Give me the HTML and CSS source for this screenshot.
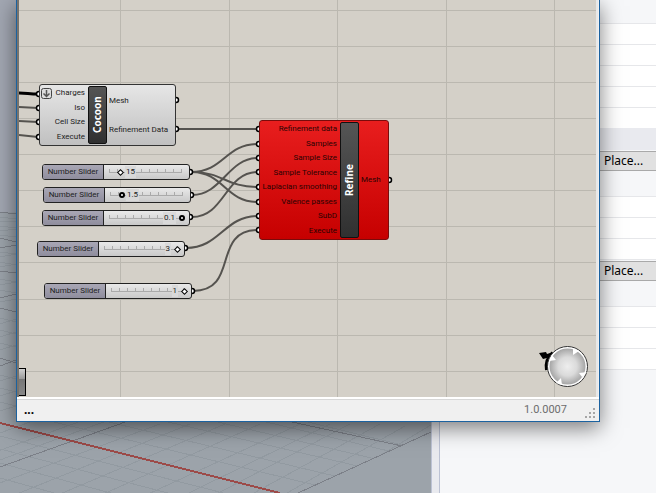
FILE: index.html
```html
<!DOCTYPE html>
<html lang="en">
<head>
<meta charset="utf-8">
<title>Cocoon definition</title>
<link rel="stylesheet" href="styles.css">
</head>
<body>
<main class="desktop">
  <div class="viewport">
    <svg class="viewport-grid" viewBox="0 0 431 493" preserveAspectRatio="xMinYMin slice" aria-hidden="true" fill="none">
      <defs>
        <clipPath id="ground"><path d="M0 420H431V432L298 493H0Z"/></clipPath>
      </defs>
      <rect y="212" width="431" height="281" fill="#9ca3aa"/>
      <g class="minor">
        <path d="M0 217l16 2M0 222l16 -1M0 226l16 2M0 231l16 -2M0 235l16 2M0 252l16 2M0 257l16 -3M0 262l16 3M0 267l16 -3M0 279l16 3M0 285l16 -3M0 290l16 3M0 302l16 -3M0 318l16 4M0 324l16 -5M0 330l16 4M0 337l16 -5M0 343l16 4M0 350l16 -5M0 375l16 4M0 381l16 -5M0 388l16 4M0 396l16 -5M0 402l16 4M0 411l16 -5"/>
      </g>
      <g class="minor" clip-path="url(#ground)">
        <path d="M0 347L431 452M0 359L431 461M0 371L431 472M0 383L431 483M0 396L431 499M0 409L431 513M0 436L431 546M0 449L431 562M0 463L431 580M0 478L431 597"/>
        <path d="M-60 455L60 411M-60 472L95 416M-60 505L160 424M-60 525L190 424M-60 545L225 424M-60 567L260 424M-60 590L300 424M-20 595L330 424M20 597L350 424M60 599L380 424M100 599L405 426M140 599L431 425M190 575L431 432M-60 482L128 413"/>
      </g>
      <path class="major" d="M0 212l16 2M0 238l16 4M0 248l16 -3M0 271l16 2M0 298l16 -4M0 308l16 4M0 358l16 5M0 366l16 -6M0 467L128 421M292 422L402 446M298 493L431 432"/>
      <path class="axis" d="M0 423L200 473L280 493"/>
    </svg>
  </div>

  <aside class="side">
    <div class="side-body">
      <div class="gap-top"></div>
      <div class="line"></div><div class="line"></div><div class="line"></div><div class="line"></div><div class="line"></div>
      <div class="heading-row"></div>
      <button class="place" type="button">Place...</button>
      <div class="spacer"></div>
      <div class="line"></div><div class="line"></div><div class="line last"></div>
      <button class="place" type="button">Place...</button>
      <div class="spacer"></div>
      <div class="line"></div><div class="line"></div><div class="line last"></div>
    </div>
  </aside>

  <section class="window">
    <div class="canvas">
      <svg class="wires" width="577" height="397" viewBox="19 0 577 397" fill="none" aria-hidden="true">
        <path class="rules" d="M19 10.500H596M19 46.500H596M19 82.500H596M19 118.500H596M19 154.500H596M19 190.500H596M19 226.500H596M19 262.500H596M19 299.500H596M19 335.500H596M19 371.500H596M120.500 0V397M229.500 0V397M337.500 0V397M446.500 0V397M554.500 0V397"/>
        <path class="wire heavy" d="M19 93C26 93 30 94 38 94"/>
        <path class="wire" d="M19 107L38 108M19 121L38 122M19 135L38 137"/>
        <path class="wire" d="M177 129H258M191 172C224 172 225 144 258 144M191 172C224 172 225 187 258 187M191 172C224 172 225 202 258 202M192 195C222 195 228 158 258 158M192 217C225 217 225 172 258 172M186 248C220 248 224 216 258 216M193 291C240 291 211 230 258 230"/>
        <g class="grips">
          <circle cx="39" cy="94" r="2.500"/><circle cx="39" cy="108" r="2.500"/><circle cx="39" cy="122" r="2.500"/><circle cx="39" cy="137" r="2.500"/>
          <circle cx="176" cy="100" r="2.500"/><circle cx="176" cy="129" r="2.500"/>
          <circle cx="190" cy="172" r="2.500"/><circle cx="191" cy="195" r="2.500"/><circle cx="190" cy="217" r="2.500"/><circle cx="185" cy="248" r="2.500"/><circle cx="192" cy="291" r="2.500"/>
          <circle cx="259" cy="129" r="2.500"/><circle cx="259" cy="144" r="2.500"/><circle cx="259" cy="158" r="2.500"/><circle cx="259" cy="172" r="2.500"/><circle cx="259" cy="187" r="2.500"/><circle cx="259" cy="202" r="2.500"/><circle cx="259" cy="216" r="2.500"/><circle cx="259" cy="230" r="2.500"/>
          <circle cx="389" cy="180" r="2.500"/>
        </g>
      </svg>

      <article class="node cocoon">
        <ul class="ports in">
          <li><svg class="flag" width="11" height="11" viewBox="0 0 11 11" fill="none" aria-hidden="true"><rect x=".5" y=".5" width="10" height="10" rx="2" fill="#dcdcdc" stroke="#444"/><path d="M5.500 2V8.500M2.500 5.500L5.500 8.500L8.500 5.500" stroke="#555" stroke-width="1.500"/></svg>Charges</li>
          <li>Iso</li><li>Cell Size</li><li>Execute</li>
        </ul>
        <h2 class="name">Cocoon</h2>
        <ul class="ports out"><li>Mesh</li><li>Refinement Data</li></ul>
      </article>

      <article class="node refine">
        <ul class="ports in">
          <li>Refinement data</li><li>Samples</li><li>Sample Size</li><li>Sample Tolerance</li><li>Laplacian smoothing</li><li>Valence passes</li><li>SubD</li><li>Execute</li>
        </ul>
        <h2 class="name">Refine</h2>
        <ul class="ports out"><li>Mesh</li></ul>
      </article>

      <div class="slider s1"><label for="r1">Number Slider</label><div class="track"><input id="r1" type="range" min="0" max="100" value="16"><output for="r1">15</output></div></div>
      <div class="slider s2"><label for="r2">Number Slider</label><div class="track"><input id="r2" class="round" type="range" min="0" max="100" value="16"><output for="r2">1.5</output></div></div>
      <div class="slider s3"><label for="r3">Number Slider</label><div class="track end"><input id="r3" class="round" type="range" min="0" max="100" value="100"><output for="r3">0.1</output></div></div>
      <div class="slider s4"><label for="r4">Number Slider</label><div class="track end"><input id="r4" type="range" min="0" max="100" value="100"><output for="r4">3</output></div></div>
      <div class="slider s5"><label for="r5">Number Slider</label><div class="track end"><input id="r5" type="range" min="0" max="100" value="100"><output for="r5">1</output></div></div>

      <div class="stub"></div>

      <svg class="compass" width="52" height="44" viewBox="537 346 52 44" fill="none" aria-hidden="true">
        <defs><radialGradient id="dial"><stop offset="0" stop-color="#eee"/><stop offset=".5" stop-color="#dadada"/><stop offset="1" stop-color="#9f9f9f"/></radialGradient></defs>
        <path d="M553 354C547 359 546 365 547 371" stroke="#000" stroke-width="4"/>
        <path d="M539 354L546 353L547 355L553 353L547 359L543 360Z" fill="#000"/>
        <circle cx="567.500" cy="367.500" r="19" fill="url(#dial)" stroke="#fff" stroke-width="2"/>
        <circle cx="567.500" cy="367.500" r="20" stroke="#333"/>
        <path d="M573 349L579 352L573 356ZM549 362L552 356L556 361ZM587 373L582 378L579 374ZM562 386L556 384L561 379Z" fill="#fff"/>
      </svg>
    </div>
    <footer class="status">
      <span class="message">...</span>
      <span class="version">1.0.0007</span>
      <svg class="resize" width="11" height="11" viewBox="0 0 11 11" aria-hidden="true"><path fill="#a6a6a6" d="M8 0h2v2h-2zM4 4h2v2H4zM8 4h2v2h-2zM0 8h2v2H0zM4 8h2v2H4zM8 8h2v2h-2z"/></svg>
    </footer>
  </section>
</main>
</body>
</html>
```

FILE: styles.css
```css
* { box-sizing: border-box; }
body { margin: 0; font-family: "Noto Sans", "Open Sans", sans-serif; }
.desktop {
  position: relative;
  display: grid;
  grid-template-columns: 1fr 225px;
  height: 100vh;
  overflow: hidden;
}
.viewport { background: #a2a7b2; overflow: hidden; }
.viewport-grid { display: block; width: 100%; height: 100%; shape-rendering: crispEdges; }
.minor path { stroke: #929aa1; }
.major { stroke: #7c8088; }
.axis { stroke: #9c4a48; stroke-width: 2; }

.side {
  background: #e9eaef;
  border-left: 1px solid #bcc2d4;
  padding-left: 7px;
}
.side-body {
  display: flow-root;
  height: 100%;
  border-left: 1px solid #bcc2d4;
  background: #f6f7f9;
}
.gap-top { height: 23px; }
.line { height: 21px; border-top: 1px solid #e6e7ea; background: #fff; }
.line.last { height: 22px; border-bottom: 1px solid #e6e7ea; }
.heading-row { height: 22px; background: #e9eaef; }
.place {
  display: block;
  width: 100%;
  height: 20px;
  margin: 1px 0 0;
  padding: 0 0 0 164px;
  border: 1px solid #a9a9a9;
  border-width: 1px 0;
  background: #e1e1e1;
  font: 12px/18px "Noto Sans", sans-serif;
  color: #000;
  text-align: left;
}
.spacer { height: 25px; }

.window {
  position: absolute;
  inset: 0 56px 71px 16px;
  display: flex;
  flex-direction: column;
  border: 1px solid #1b62a0;
  border-top: 0;
  background: #f0f0f0;
  box-shadow: 0 6px 20px rgba(0, 0, 0, .5);
}
.canvas {
  position: relative;
  flex: 1;
  overflow: hidden;
  margin: 0 1px 0 0;
  border-left: 2px solid #77736d;
  border-right: 2px solid #e8e8e8;
  background: #d4d0c8;
}
.wires { display: block; }
.rules { stroke: #bbb8b0; }
.wire { stroke: #55534f; stroke-width: 2; }
.wire.heavy { stroke: #000; stroke-width: 3; }
.grips circle { fill: #fff; stroke: #000; stroke-width: 1.5; }

.node {
  position: absolute;
  display: grid;
  border: 1px solid #333;
  border-radius: 3px;
  font: 8px/12px Roboto, sans-serif;
  color: #222;
  white-space: nowrap;
}
.cocoon {
  left: 20px;
  top: 84px;
  width: 137px;
  height: 62px;
  grid-template-columns: 48px 19px 1fr;
  background: linear-gradient(#e6e6e6, #c0c0c0);
}
.refine {
  left: 240px;
  top: 120px;
  width: 130px;
  height: 120px;
  grid-template-columns: 80px 19px 1fr;
  border-color: #7a0b0b;
  background: linear-gradient(#e81e1e, #c60000);
  color: #2a0303;
}
.ports {
  display: flex;
  flex-direction: column;
  margin: 0;
  padding: 1px 3px 1px 1px;
  list-style: none;
}
.ports li { flex: 1; display: flex; align-items: center; }
.ports.in li { justify-content: flex-end; }
.ports.out { padding-left: 2px; }
.flag { margin-right: auto; }
.name {
  margin: 1px 0;
  border: 1px solid #111;
  border-radius: 2px;
  background: linear-gradient(#303030, #555);
  color: #fff;
  font: bold 10px/17px "Noto Sans", sans-serif;
  text-align: center;
  writing-mode: vertical-rl;
  transform: rotate(180deg);
}

.slider {
  position: absolute;
  display: grid;
  grid-template-columns: 61px 1fr;
  width: 148px;
  height: 16px;
  border: 1px solid #222;
  border-radius: 3px;
  background: linear-gradient(#e9e9e9, #c9c9c9);
  font: 8px/13px Roboto, sans-serif;
  color: #222;
}
.slider label {
  border-right: 1px solid #222;
  border-radius: 2px 0 0 2px;
  background: linear-gradient(#a9a7b5, #8f8d9d);
  text-align: center;
  white-space: nowrap;
}
.s1 { left: 23px; top: 164px; }
.s2 { left: 24px; top: 187px; }
.s3 { left: 23px; top: 210px; }
.s4 { left: 18px; top: 241px; }
.s5 { left: 25px; top: 283px; }
.track { position: relative; padding: 0 4px 0 2px; }
.track input {
  appearance: none;
  display: block;
  width: 100%;
  height: 14px;
  margin: 0;
  background:
    linear-gradient(#aaa, #aaa) 3px 7px / 73px 1px no-repeat,
    repeating-linear-gradient(90deg, #aaa 0 1px, transparent 1px 8px) 3px 4px / 73px 4px no-repeat;
}
.track input::-webkit-slider-thumb {
  appearance: none;
  width: 5px;
  height: 5px;
  border: 1px solid #000;
  background: #fff;
  transform: rotate(45deg);
}
.track input.round::-webkit-slider-thumb {
  width: 6px;
  height: 6px;
  border-width: 2px;
  border-radius: 50%;
  transform: none;
}
.track output {
  position: absolute;
  top: 1px;
  left: 21px;
  padding: 0 1px;
  line-height: 12px;
  background: #d9d9d9;
}
.track.end output { left: auto; right: 13px; }

.stub {
  position: absolute;
  left: -1px;
  bottom: 1px;
  width: 8px;
  height: 28px;
  border: 1px solid #000;
  background: linear-gradient(#d0d0d0, #999 38%, #777 40%, #888);
}
.compass { position: absolute; right: 7px; bottom: 8px; }

.status {
  display: flex;
  align-items: center;
  height: 24px;
  padding: 0 3px 0 7px;
  border-top: 2px solid #fff;
  box-shadow: inset 0 1px #d7d7d7;
  color: #000;
}
.message { flex: 1; font: bold 12px/16px "Noto Sans", sans-serif; }
.version { margin-right: 18px; font: 11px/16px Roboto, sans-serif; color: #6d6d6d; }
.resize { align-self: flex-end; margin-bottom: 2px; }
```
